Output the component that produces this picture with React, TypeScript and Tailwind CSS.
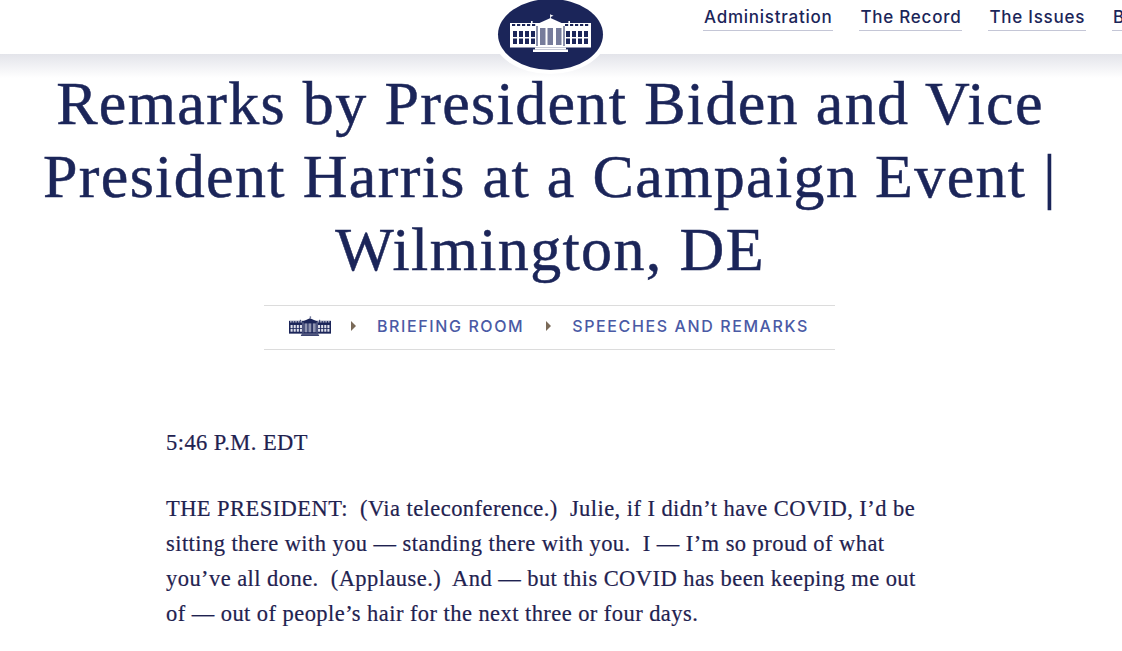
function WhiteHouse({ fg, bg, className }: { fg: string; bg: string; className: string }) {
  const cols = [3, 9, 15, 21, 56, 62, 68, 74];
  const dashes = [2, 7, 12, 17, 22, 55, 60, 65, 70, 75];
  return (
    <svg viewBox="0 0 81 38" className={className} aria-hidden="true">
      <path d="M40.5 0.5 v4" stroke={fg} strokeWidth="0.8" />
      <path d="M40.5 0.5 l3 1.2 l-3 1.2 Z" fill={fg} />
      <path d="M25 11 L40.5 4 L56 11 Z" fill={fg} />
      <rect x="21" y="7" width="1.6" height="3" fill={fg} />
      <rect x="58.4" y="7" width="1.6" height="3" fill={fg} />
      <rect x="0" y="9" width="81" height="24" fill={fg} />
      <rect x="0" y="31" width="81" height="2.5" fill={fg} />
      <rect x="25" y="33.5" width="31" height="2" fill={fg} />
      <rect x="23" y="35.5" width="35" height="2.5" fill={fg} />
      {dashes.map((x) => (
        <rect key={x} x={x} y="10" width="3.2" height="2" fill={bg} />
      ))}
      {cols.map((x) => (
        <g key={x}>
          <rect x={x} y="17" width="4" height="6" fill={bg} />
          <rect x={x} y="24.5" width="4" height="5.5" fill={bg} />
        </g>
      ))}
      <rect x="26.5" y="12" width="1" height="20" fill={bg} />
      <rect x="53.5" y="12" width="1" height="20" fill={bg} />
      {[30, 37.5, 46].map((x) => (
        <rect key={x} x={x} y="14" width="5.5" height="17" fill={bg} opacity="0.6" />
      ))}
    </svg>
  );
}

function NavLink({ label }: { label: string }) {
  return (
    <a className="border-b border-[#c4c6d6] pb-[1px] px-[1px] text-[17px] leading-[23px] tracking-[0.75px] text-[#1b2559] font-medium whitespace-nowrap">
      {label}
    </a>
  );
}

function Caret() {
  return <span className="w-0 h-0 border-y-[5px] border-y-transparent border-l-[5px] border-l-[#7a6a58]" />;
}

export default function App() {
  return (
    <div className="relative w-[1122px] h-[651px] overflow-hidden bg-white font-['Liberation_Serif',serif] text-[#1b2559]">
      <header className="h-[54px] bg-white flex justify-end font-['Inter',sans-serif]">
        <nav className="flex items-start gap-[26px] pt-[6px] w-[419px] shrink-0 overflow-hidden">
          <NavLink label="Administration" />
          <NavLink label="The Record" />
          <NavLink label="The Issues" />
          <NavLink label="Briefing" />
        </nav>
      </header>
      <div className="absolute left-0 top-[54px] w-full h-[24px] bg-gradient-to-b from-[#e3e4ea] to-white" />
      <div className="absolute left-[492px] top-[-6px] w-[116px] h-[80px] rounded-[50%] bg-white flex items-center justify-center">
        <div className="w-[105px] h-[71px] rounded-[50%] bg-[#1b2559] flex items-center justify-center">
          <WhiteHouse fg="#ffffff" bg="#1b2559" className="w-[81px] h-[38px] mt-[-3px]" />
        </div>
      </div>

      <main className="relative">
        <h1 className="w-[1100px] mt-[13px] text-center text-[62px] leading-[73px] tracking-[1.35px] font-normal [-webkit-text-stroke:0.5px_#1b2559]">
          Remarks by President Biden and Vice
          <br />
          President Harris at a Campaign Event |
          <br />
          Wilmington, DE
        </h1>
        <div className="ml-[264px] mt-[19px] w-[571px] h-[45px] border-y border-[#dcdcdc] flex items-center pl-[25px] pb-[3px] font-['Inter',sans-serif] text-[16px] tracking-[1.6px] font-medium text-[#4a5aa5] whitespace-nowrap">
          <WhiteHouse fg="#1b2559" bg="#dfe1ec" className="w-[42px] h-[20px]" />
          <span className="ml-[20px] mr-[21px] flex"><Caret /></span>
          <span>BRIEFING ROOM</span>
          <span className="ml-[22px] mr-[21px] flex"><Caret /></span>
          <span>SPEECHES AND REMARKS</span>
        </div>
        <article className="ml-[166px] mt-[75px] w-[780px] text-[22.5px] leading-[35px] tracking-[0.44px] text-[#1f2250] [-webkit-text-stroke:0.2px_#1f2250]">
          <p>5:46 P.M. EDT</p>
          <p className="mt-[31px] whitespace-pre-wrap">
            {"THE PRESIDENT:  (Via teleconference.)  Julie, if I didn’t have COVID, I’d be"}
            <br />
            {"sitting there with you — standing there with you.  I — I’m so proud of what"}
            <br />
            {"you’ve all done.  (Applause.)  And — but this COVID has been keeping me out"}
            <br />
            {"of — out of people’s hair for the next three or four days."}
          </p>
        </article>
      </main>
    </div>
  );
}
